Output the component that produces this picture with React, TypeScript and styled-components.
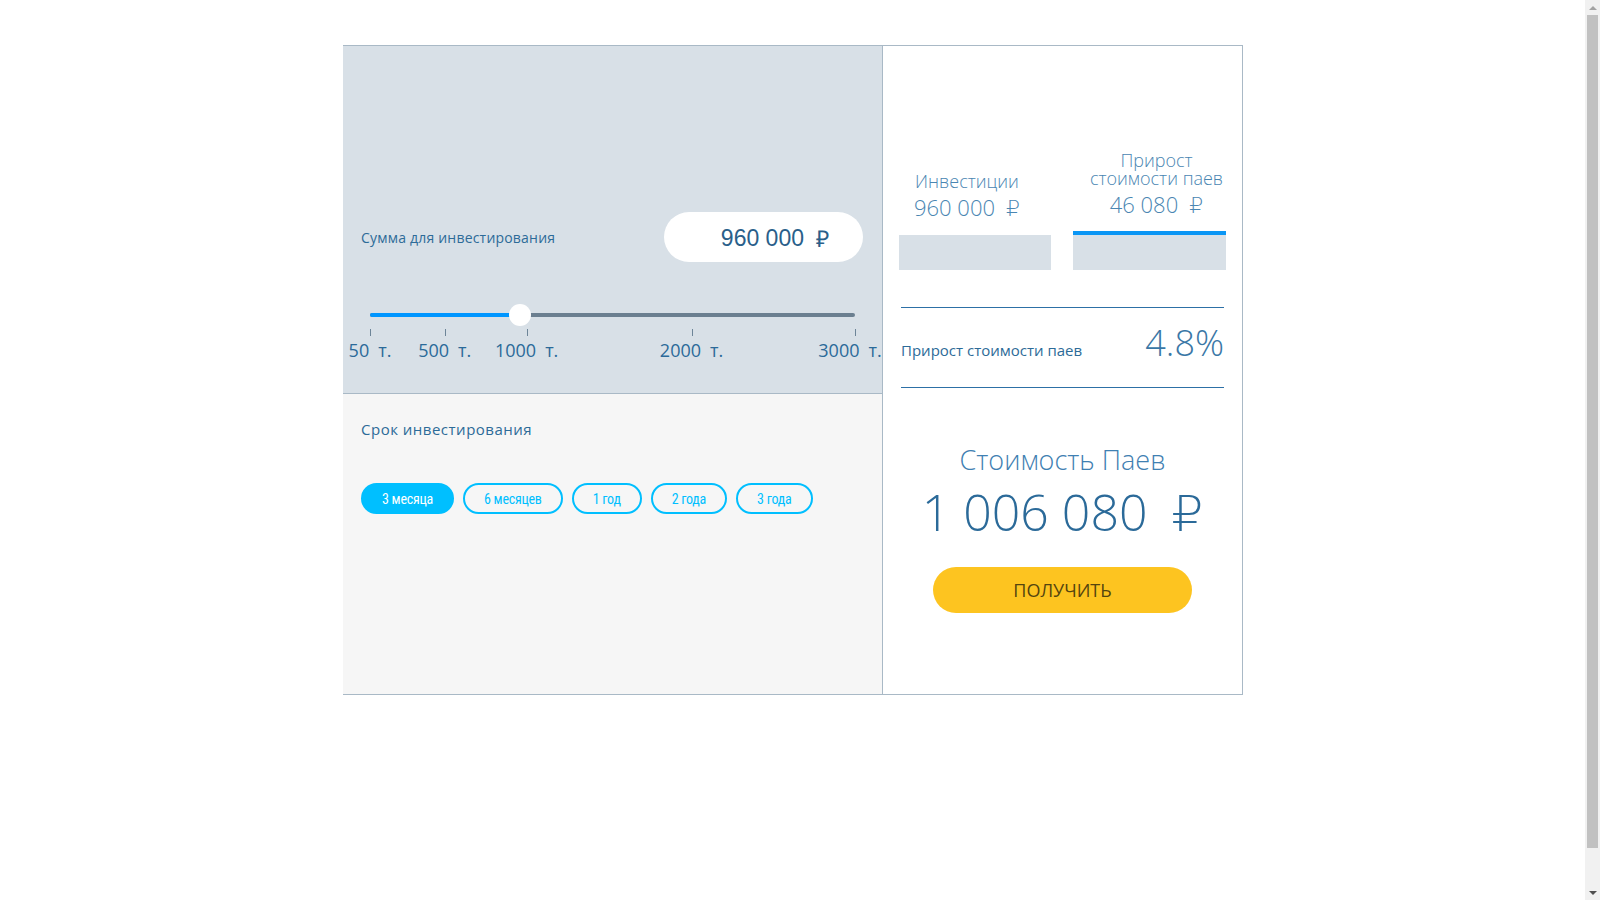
import React from "react";
import styled, { createGlobalStyle } from "styled-components";

const Global = createGlobalStyle`
  html, body { margin: 0; padding: 0; background: #ffffff; }
  body { font-family: "Open Sans", "DejaVu Sans", sans-serif; }
  #root { min-height: 940px; }
`;

const Page = styled.div`
  padding: 45px 0 0 343px;
`;

const Card = styled.div`
  box-sizing: border-box;
  width: 900px;
  display: grid;
  grid-template-columns: 540px 359px;
  border-top: 1px solid #a9b9c6;
  border-right: 1px solid #a9b9c6;
  border-bottom: 1px solid #a9b9c6;
`;

const LeftCol = styled.div`
  display: flex;
  flex-direction: column;
  border-right: 1px solid #a9b9c6;
  overflow: hidden;
`;

const TopPanel = styled.div`
  box-sizing: border-box;
  height: 348px;
  background: #d8e0e7;
  border-bottom: 1px solid #a9b9c6;
  padding: 166px 19px 0 18px;
`;

const InputRow = styled.div`
  display: flex;
  align-items: center;
  justify-content: space-between;
`;

const FieldLabel = styled.span`
  font-size: 14px;
  letter-spacing: 0.2px;
  color: #2d6b98;
`;

const AmountPill = styled.div`
  width: 199px;
  height: 50px;
  border-radius: 25px;
  background: #ffffff;
  display: flex;
  align-items: center;
  justify-content: flex-end;
  padding: 2px 34px 0 0;
  box-sizing: border-box;
  font-family: "Liberation Sans", Arial, sans-serif;
  font-size: 23px;
  color: #2a5f8a;
`;

const Rub = styled.span<{ $gap?: number }>`
  margin-left: ${(p) => p.$gap ?? 10}px;
`;

const Slider = styled.div`
  position: relative;
  margin: 51px 8px 0 9px;
`;

const Track = styled.div`
  position: relative;
  height: 4px;
  border-radius: 2px;
  background: #6b7f90;
`;

const Fill = styled.div`
  position: absolute;
  left: 0;
  top: 0;
  bottom: 0;
  border-radius: 2px;
  background: #0096ff;
`;

const Thumb = styled.div`
  position: absolute;
  top: 2px;
  width: 22px;
  height: 22px;
  border-radius: 50%;
  background: #ffffff;
  transform: translate(-50%, -50%);
`;

const Scale = styled.div`
  position: relative;
  height: 46px;
`;

const Tick = styled.div`
  position: absolute;
  top: 12px;
  width: 1px;
  height: 7px;
  background: #6d8598;
`;

const TickLabel = styled.div`
  position: absolute;
  top: 21px;
  transform: translateX(-50%);
  white-space: nowrap;
  font-size: 18px;
  line-height: 24px;
  color: #2b6a99;
`;

const Unit = styled.span`
  margin-left: 9px;
`;

const BottomPanel = styled.div`
  height: 300px;
  box-sizing: border-box;
  background: #f6f6f6;
  padding: 25px 18px 0;
`;

const SectionTitle = styled.div`
  font-size: 15px;
  line-height: 20px;
  letter-spacing: 0.5px;
  color: #2d6b98;
`;

const TermRow = styled.div`
  display: flex;
  gap: 9px;
  margin-top: 44px;
`;

const TermButton = styled.button<{ $active?: boolean }>`
  height: 31px;
  box-sizing: border-box;
  padding: 0 19px;
  border-radius: 16px;
  border: 2px solid #00bfff;
  background: ${(p) => (p.$active ? "#00bfff" : "transparent")};
  color: ${(p) => (p.$active ? "#ffffff" : "#00bfff")};
  font-family: "Liberation Sans Narrow", "Roboto Condensed", "Liberation Sans", sans-serif;
  font-size: 14px;
  letter-spacing: -0.25px;
  cursor: pointer;
`;

const RightCol = styled.div`
  display: flex;
  flex-direction: column;
  background: #ffffff;
`;

const StatsRow = styled.div`
  height: 224px;
  box-sizing: border-box;
  padding: 0 16px;
  display: grid;
  grid-template-columns: 152px 153px;
  column-gap: 22px;
  align-items: end;
`;

const StatCol = styled.div`
  display: flex;
  flex-direction: column;
`;

const StatText = styled.div<{ $side: "left" | "right" }>`
  display: flex;
  flex-direction: column;
  align-items: center;
  text-align: center;
  margin: ${(p) => (p.$side === "left" ? "0 16px 15px 0" : "0 -7px 14px 7px")};
  color: #4a86b2;
  font-weight: 300;
`;

const StatLabel = styled.div`
  font-size: 18px;
  line-height: 18px;
  white-space: pre-line;
`;

const StatValue = styled.div`
  font-size: 22px;
  line-height: 26px;
  margin-top: 4px;
  white-space: nowrap;
`;

const StatBar = styled.div<{ $accent?: boolean }>`
  height: 35px;
  background: #d8e0e7;
  border-top: ${(p) => (p.$accent ? "4px solid #0a96f5" : "none")};
`;

const RateRow = styled.div`
  margin: 37px 18px 0;
  height: 81px;
  box-sizing: border-box;
  padding-top: 14px;
  border-top: 1px solid #2d70a6;
  border-bottom: 1px solid #2d70a6;
  display: flex;
  align-items: baseline;
  justify-content: space-between;
`;

const RateLabel = styled.span`
  font-size: 15px;
  color: #2d6b98;
`;

const RateValue = styled.span`
  font-size: 36px;
  line-height: 42px;
  font-weight: 300;
  color: #3a77a6;
`;

const Total = styled.div`
  display: flex;
  flex-direction: column;
  align-items: center;
  padding-top: 54px;
`;

const TotalTitle = styled.div`
  font-size: 27px;
  line-height: 36px;
  font-weight: 300;
  color: #3f80b2;
`;

const TotalValue = styled.div`
  margin-top: 6px;
  font-size: 50px;
  line-height: 56px;
  font-weight: 300;
  color: #2b6a99;
  white-space: nowrap;
`;

const GetButton = styled.button`
  margin-top: 27px;
  width: 259px;
  height: 46px;
  border: none;
  border-radius: 23px;
  background: #fdc420;
  color: #54450f;
  font-family: "Open Sans", sans-serif;
  font-size: 18px;
  cursor: pointer;
`;

/* Browser scrollbar as seen in the screenshot (decorative overlay) */
const ScrollBar = styled.div`
  position: fixed;
  top: 0;
  right: 0;
  width: 15px;
  height: 100vh;
  background: #f1f1f1;
  display: flex;
  flex-direction: column;
`;

const ScrollArrow = styled.div<{ $down?: boolean }>`
  height: 15px;
  display: flex;
  align-items: center;
  justify-content: center;
  &::before {
    content: "";
    width: 0;
    height: 0;
    border-left: 4px solid transparent;
    border-right: 4px solid transparent;
    ${(p) =>
      p.$down
        ? "border-top: 4px solid #505050;"
        : "border-bottom: 4px solid #a3a3a3;"}
  }
`;

const ScrollTrack = styled.div`
  flex: 1;
  padding: 0 2px;
`;

const ScrollThumb = styled.div`
  height: 833px;
  background: #c1c1c1;
`;

const ticks = [
  { label: "50", pct: 0, shift: 0 },
  { label: "500", pct: 15.4, shift: 0 },
  { label: "1000", pct: 32.3, shift: 0 },
  { label: "2000", pct: 66.3, shift: 0 },
  { label: "3000", pct: 100, shift: -5 },
];

const terms = ["3 месяца", "6 месяцев", "1 год", "2 года", "3 года"];

const thumbPct = 15.4 + (460 / 500) * (32.3 - 15.4);

export default function App() {
  return (
    <>
      <Global />
      <Page>
        <Card>
          <LeftCol>
            <TopPanel>
              <InputRow>
                <FieldLabel>Сумма для инвестирования</FieldLabel>
                <AmountPill>
                  960 000<Rub $gap={12}>₽</Rub>
                </AmountPill>
              </InputRow>
              <Slider>
                <Track>
                  <Fill style={{ width: `${thumbPct}%` }} />
                  <Thumb style={{ left: `${thumbPct}%` }} />
                </Track>
                <Scale>
                  {ticks.map((t) => (
                    <React.Fragment key={t.label}>
                      <Tick style={{ left: `${t.pct}%` }} />
                      <TickLabel style={{ left: `calc(${t.pct}% + ${t.shift}px)` }}>
                        {t.label}
                        <Unit>т.</Unit>
                      </TickLabel>
                    </React.Fragment>
                  ))}
                </Scale>
              </Slider>
            </TopPanel>
            <BottomPanel>
              <SectionTitle>Срок инвестирования</SectionTitle>
              <TermRow>
                {terms.map((t, i) => (
                  <TermButton key={t} $active={i === 0}>
                    {t}
                  </TermButton>
                ))}
              </TermRow>
            </BottomPanel>
          </LeftCol>
          <RightCol>
            <StatsRow>
              <StatCol>
                <StatText $side="left">
                  <StatLabel>Инвестиции</StatLabel>
                  <StatValue>
                    960 000<Rub $gap={11}>₽</Rub>
                  </StatValue>
                </StatText>
                <StatBar />
              </StatCol>
              <StatCol>
                <StatText $side="right">
                  <StatLabel>{"Прирост\nстоимости паев"}</StatLabel>
                  <StatValue>
                    46 080<Rub $gap={11}>₽</Rub>
                  </StatValue>
                </StatText>
                <StatBar $accent />
              </StatCol>
            </StatsRow>
            <RateRow>
              <RateLabel>Прирост стоимости паев</RateLabel>
              <RateValue>4.8%</RateValue>
            </RateRow>
            <Total>
              <TotalTitle>Стоимость Паев</TotalTitle>
              <TotalValue>
                1 006 080<Rub $gap={24}>₽</Rub>
              </TotalValue>
              <GetButton>ПОЛУЧИТЬ</GetButton>
            </Total>
          </RightCol>
        </Card>
      </Page>
      <ScrollBar aria-hidden="true">
        <ScrollArrow />
        <ScrollTrack>
          <ScrollThumb />
        </ScrollTrack>
        <ScrollArrow $down />
      </ScrollBar>
    </>
  );
}
